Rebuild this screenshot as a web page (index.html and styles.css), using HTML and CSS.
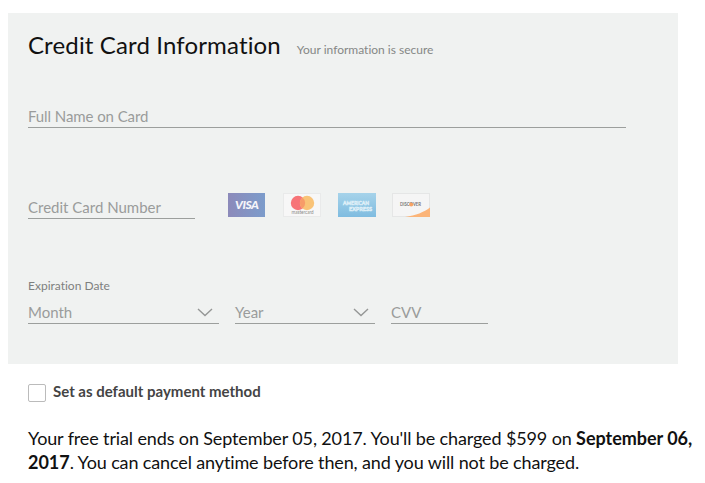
FILE: index.html
```html
<!DOCTYPE html>
<html lang="en">
<head>
  <meta charset="UTF-8" />
  <title>Credit Card Information</title>
  <link rel="stylesheet" href="styles.css">
</head>
<body>
  <form>
    <div class="panel">
      <div class="heading">
        <h1>Credit Card Information</h1>
        <span class="secure">Your information is secure</span>
      </div>

      <input type="text" class="field name" placeholder="Full Name on Card" />

      <div class="number-row">
        <input type="text" class="field number" placeholder="Credit Card Number" />
        <div class="cards">
          <svg class="card" viewBox="0 0 38 24">
            <defs>
              <linearGradient id="visa">
                <stop offset="0" stop-color="#8c8aba" />
                <stop offset="1" stop-color="#7c9ccb" />
              </linearGradient>
            </defs>
            <rect width="37" height="24" fill="url(#visa)" />
            <text x="7" y="16" class="visa-text" textLength="24">VISA</text>
          </svg>
          <svg class="card" viewBox="0 0 38 24">
            <rect x="0.5" y="0.5" width="37" height="23" fill="#f7f7f7" stroke="#e9eaea" />
            <circle cx="15" cy="10" r="7.2" fill="#f77478" />
            <circle cx="24" cy="10" r="7.2" fill="#f9c377" />
            <path d="M19.5 4.4a7.2 7.2 0 0 1 0 11.2a7.2 7.2 0 0 1 0-11.2z" fill="#f79b69" />
            <text x="8.5" y="20.5" class="mc-text" textLength="22" lengthAdjust="spacingAndGlyphs">mastercard</text>
          </svg>
          <svg class="card" viewBox="0 0 38 24">
            <defs>
              <linearGradient id="amex" x2="0" y2="1">
                <stop offset="0" stop-color="#a6d3ea" />
                <stop offset="1" stop-color="#7fbce0" />
              </linearGradient>
            </defs>
            <rect width="38" height="24" fill="url(#amex)" />
            <text x="5" y="11.7" class="amex-text" textLength="26" lengthAdjust="spacingAndGlyphs">AMERICAN</text>
            <text x="11" y="18.2" class="amex-text" textLength="23" lengthAdjust="spacingAndGlyphs">EXPRESS</text>
          </svg>
          <svg class="card discover" viewBox="0 0 38 24">
            <rect x="0.5" y="0.5" width="37" height="23" fill="#f5f5f5" stroke="#e5e6e6" />
            <path d="M38 14.5V24H13C24 22.5 32 19 38 14.5z" fill="#fbb478" />
            <text x="8" y="13.2" class="discover-text" textLength="21" lengthAdjust="spacingAndGlyphs">DISCOVER</text>
            <circle cx="19.2" cy="11.4" r="2" fill="#f8a263" />
          </svg>
        </div>
      </div>

      <div class="label">Expiration Date</div>
      <div class="expiry-row">
        <div class="field select month">
          <span>Month</span>
          <svg class="arrow" viewBox="0 0 16 9"><path d="M1 1L8 7.5L15 1" /></svg>
        </div>
        <div class="field select year">
          <span>Year</span>
          <svg class="arrow" viewBox="0 0 16 9"><path d="M1 1L8 7.5L15 1" /></svg>
        </div>
        <input type="text" class="field cvv" placeholder="CVV" />
      </div>
    </div>

    <label class="default">
      <input type="checkbox" class="checkbox" />
      <span>Set as default payment method</span>
    </label>

    <p class="trial">Your free trial ends on September 05, 2017. You'll be charged $599 on <b>September 06, 2017</b>. You can cancel anytime before then, and you will not be charged.</p>
  </form>
</body>
</html>
```
FILE: styles.css
```css
* {
  box-sizing: border-box;
}

body {
  margin: 0;
  padding: 13px 0 0 8px;
  background: #fff;
  color: #111;
  font-family: Lato, sans-serif;
  font-variant-ligatures: none;
}

.panel {
  width: 670px;
  height: 351px;
  padding: 17px 20px;
  background: #f0f2f1;
}

.heading {
  display: flex;
  align-items: baseline;
  gap: 16px;
  height: 30px;
}

h1 {
  margin: 0;
  font-size: 24px;
  font-weight: normal;
  line-height: 30px;
  letter-spacing: 0.14px;
}

.secure {
  color: #858786;
  font-size: 12px;
}

.field {
  display: block;
  height: 24px;
  padding: 0;
  border: 0;
  border-bottom: 1px solid #9c9f9d;
  border-radius: 0;
  outline: 0;
  background: transparent;
  color: #9a9c9b;
  font-family: inherit;
  font-size: 15px;
  line-height: 23px;
}

.field::placeholder {
  color: #9a9c9b;
  opacity: 1;
}

.name {
  width: 598px;
  margin-top: 44px;
  letter-spacing: -0.08px;
}

.number-row {
  display: flex;
  align-items: flex-end;
  gap: 33px;
  margin-top: 65px;
  height: 26px;
}

.number {
  width: 167px;
}

.cards {
  display: flex;
  gap: 17px;
  padding-bottom: 2px;
}

.card {
  display: block;
  width: 38px;
  height: 24px;
}

.discover {
  margin-left: -1px;
}

.visa-text {
  fill: #f5f5fa;
  font-size: 12px;
  font-style: italic;
  font-weight: 900;
}

.mc-text {
  fill: #888;
  font-size: 5px;
}

.amex-text {
  fill: none;
  stroke: #dceef7;
  stroke-width: 0.7px;
  font-size: 6px;
  font-weight: bold;
}

.discover-text {
  fill: #777;
  font-size: 5px;
  font-weight: bold;
}

.label {
  margin-top: 59px;
  color: #7e807f;
  font-size: 12px;
  line-height: 16px;
}

.expiry-row {
  display: flex;
  gap: 16px;
  margin-top: 6px;
}

.select {
  display: flex;
  justify-content: space-between;
  align-items: center;
  padding: 2px 6px 0 0;
}

.month {
  width: 191px;
}

.year {
  width: 140px;
}

.cvv {
  width: 97px;
}

.arrow {
  width: 16px;
  height: 9px;
  fill: none;
  stroke: #959796;
  stroke-width: 1.4;
}

.default {
  display: flex;
  align-items: center;
  gap: 7px;
  margin: 20px 0 0 20px;
  height: 18px;
  color: #444;
  font-size: 15px;
  font-weight: bold;
}

.default span {
  line-height: 18px;
  padding-bottom: 4px;
}

.checkbox {
  appearance: none;
  width: 18px;
  height: 18px;
  margin: 0;
  border: 1px solid #bbb;
  border-radius: 2px;
  background: #fff;
}

.trial {
  width: 677px;
  margin: 24px 0 0 20px;
  font-size: 18px;
  line-height: 24px;
  letter-spacing: -0.13px;
}

.trial b {
  letter-spacing: -0.03px;
}
```
